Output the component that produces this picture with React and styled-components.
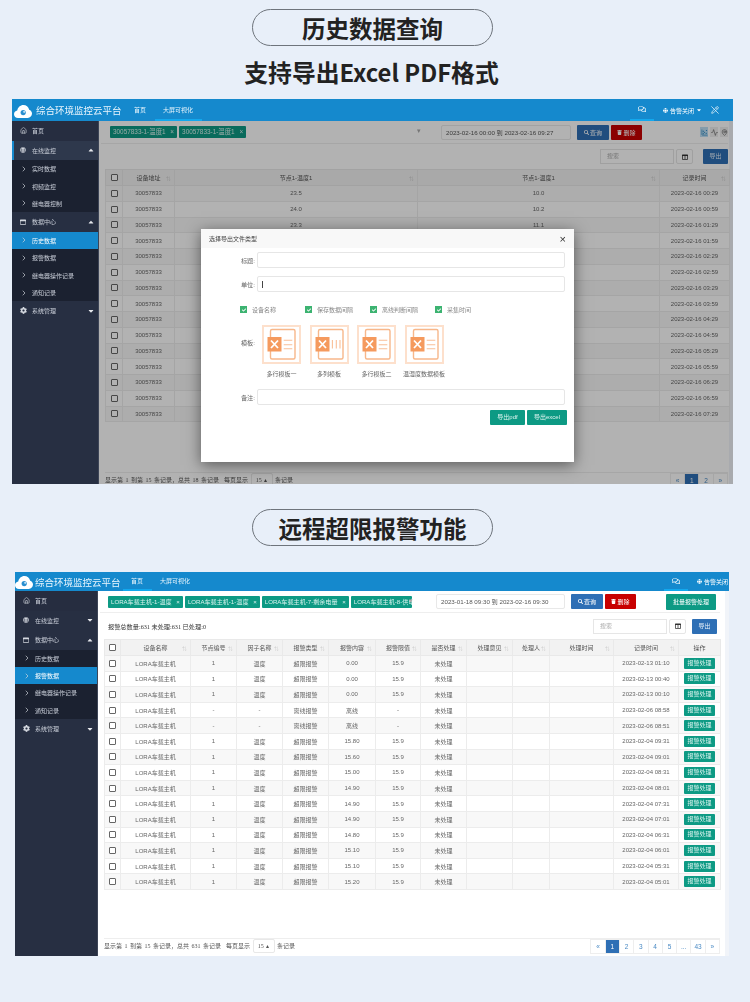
import React from "react";
import styled, { createGlobalStyle } from "styled-components";
import { House, ChevronRight, PencilOff, Activity, MapPin, ScatterChart } from "lucide-react";
import {
  FaGlobe, FaRegWindowMaximize, FaCog, FaCaretUp, FaCaretDown, FaRegComments,
  FaSearch, FaTrash, FaColumns, FaCheck,
} from "react-icons/fa";

const GREEN = "#0d9a84";
const BLUE = "#1589cd";

// only the first rows can be read, the modal covers the others
const historyRows = [
  ["23.5", "10.0", "00:29"], ["24.0", "10.2", "00:59"], ["23.3", "11.1", "01:29"],
  ["", "", "01:59"], ["", "", "02:29"], ["", "", "02:59"],
  ["", "", "03:29"], ["", "", "03:59"], ["", "", "04:29"],
  ["", "", "04:59"], ["", "", "05:29"], ["", "", "05:59"],
  ["", "", "06:29"], ["", "", "06:59"], ["", "", "07:29"],
];

const over = (content, time) => ["1", "温度", "超限报警", content, "15.9", time];
const offline = (time) => ["-", "-", "离线报警", "离线", "-", time];
const alarmRows = [
  over("0.00", "2023-02-13 01:10"), over("0.00", "2023-02-13 00:40"), over("0.00", "2023-02-13 00:10"),
  offline("2023-02-06 08:58"), offline("2023-02-06 08:51"),
  over("15.80", "2023-02-04 09:31"), over("15.60", "2023-02-04 09:01"), over("15.00", "2023-02-04 08:31"),
  over("14.90", "2023-02-04 08:01"), over("14.90", "2023-02-04 07:31"), over("14.90", "2023-02-04 07:01"),
  over("14.80", "2023-02-04 06:31"), over("15.10", "2023-02-04 06:01"), over("15.10", "2023-02-04 05:31"),
  over("15.20", "2023-02-04 05:01"),
];

const menuOne = [
  { type: "top", label: "首页", icon: <House size={7} /> },
  { type: "open", label: "在线监控", icon: <FaGlobe size={6} />, caret: "up" },
  { type: "sub", label: "实时数据" },
  { type: "sub", label: "视频监控" },
  { type: "sub", label: "继电器控制" },
  { type: "group", label: "数据中心", icon: <FaRegWindowMaximize size={6} />, caret: "up" },
  { type: "active", label: "历史数据" },
  { type: "sub", label: "报警数据" },
  { type: "sub", label: "继电器操作记录" },
  { type: "sub", label: "通知记录" },
  { type: "group", label: "系统管理", icon: <FaCog size={7} />, caret: "down" },
];

const menuTwo = [
  { type: "top", label: "首页", icon: <House size={7} /> },
  { type: "group", label: "在线监控", icon: <FaGlobe size={6} />, caret: "down" },
  { type: "group", label: "数据中心", icon: <FaRegWindowMaximize size={6} />, caret: "up" },
  { type: "sub", label: "历史数据" },
  { type: "active", label: "报警数据" },
  { type: "sub", label: "继电器操作记录" },
  { type: "sub", label: "通知记录" },
  { type: "group", label: "系统管理", icon: <FaCog size={7} />, caret: "down" },
];

export default function App() {
  return (
    <Page>
      <GlobalStyle />
      <PillTitle>历史数据查询</PillTitle>
      <SubTitle>支持导出Excel PDF格式</SubTitle>

      <Shot $left={12} $width={721} $height={385} $side={87} $head={22}>
        <TopBar active="大屏可视化" logoLeft={2} brandGap={4} tabOffset={4} cutRight={0} />
        <SideMenu items={menuOne} />
        <Content $padR={1}>
          <Toolbar $h={23}>
            <TagSelect $width={319} $pad={2}>
              <Tag $size={6.4}>30057833-1-温度1 <b>×</b></Tag>
              <Tag $size={6.4}>30057833-1-温度1 <b>×</b></Tag>
              <SelectArrow>▾</SelectArrow>
            </TagSelect>
            <DateBox $left={14} $width={130}>2023-02-16 00:00 到 2023-02-16 09:27</DateBox>
            <QueryBtn><FaSearch size={5} /> 查询</QueryBtn>
            <DeleteBtn><FaTrash size={5} /> 删除</DeleteBtn>
            <MiniIcons>
              <MiniIcon $on><ScatterChart size={7} /></MiniIcon>
              <MiniIcon><Activity size={7} /></MiniIcon>
              <MiniIcon><MapPin size={7} /></MiniIcon>
            </MiniIcons>
          </Toolbar>
          <SearchBar $h={25} $padR={0}>
            <SearchRight>
              <SearchBox>搜索</SearchBox>
              <ColumnBtn><FaColumns size={6} /></ColumnBtn>
              <ExportBtn $left={10}>导出</ExportBtn>
            </SearchRight>
          </SearchBar>
          <Table $row={15.75}>
            <colgroup>
              {[17, 52, 243, 242, 70].map((w, i) => <col key={i} width={w} />)}
            </colgroup>
            <thead>
              <tr>
                <Th><Box /></Th>
                {["设备地址", "节点1-温度1", "节点1-温度1", "记录时间"].map((h, i) => (
                  <Th key={i}>{h}<Sort>⇅</Sort></Th>
                ))}
              </tr>
            </thead>
            <tbody>
              {historyRows.map((r, i) => (
                <tr key={i}>
                  <Td><Box /></Td>
                  <Td>30057833</Td>
                  <Td>{r[0]}</Td>
                  <Td>{r[1]}</Td>
                  <Td>2023-02-16 {r[2]}</Td>
                </tr>
              ))}
            </tbody>
          </Table>
          <Footer $drop={-3}>
            <FooterText>
              显示第 1 到第 15 条记录，总共 18 条记录 &nbsp;每页显示 <PageSize>15 ▴</PageSize> 条记录
            </FooterText>
            <Pager pages={["«", "1", "2", "»"]} />
          </Footer>
          <Overlay>
            <ExportModal />
          </Overlay>
        </Content>
      </Shot>

      <PillTitle $top={25}>远程超限报警功能</PillTitle>

      <Shot $left={15} $width={714} $height={384} $side={83} $head={19} $top={26}>
        <TopBar active="首页" logoLeft={0} brandGap={2} tabOffset={2} cutRight={38} />
        <SideMenu items={menuTwo} />
        <Content $padR={5}>
          <Toolbar $h={22}>
            <TagSelect $width={312} $pad={1}>
              <Tag $size={6.1}>LORA车载主机-1-温度 <b>×</b></Tag>
              <Tag $size={6.1}>LORA车载主机-1-温度 <b>×</b></Tag>
              <Tag $size={6.1}>LORA车载主机-7-剩余电量 <b>×</b></Tag>
              <Tag $size={6.1} $cut>LORA车载主机-8-供电状态</Tag>
              <SelectArrow>▾</SelectArrow>
            </TagSelect>
            <DateBox $left={17} $width={129}>2023-01-18 09:30 到 2023-02-16 09:30</DateBox>
            <QueryBtn><FaSearch size={5} /> 查询</QueryBtn>
            <DeleteBtn><FaTrash size={5} /> 删除</DeleteBtn>
            <BatchBtn>批量报警处理</BatchBtn>
          </Toolbar>
          <SearchBar $h={26} $padR={3}>
            <Summary>报警总数量:631 未处理:631 已处理:0</Summary>
            <SearchRight>
              <SearchBox>搜索</SearchBox>
              <ColumnBtn><FaColumns size={6} /></ColumnBtn>
              <ExportBtn $left={6}>导出</ExportBtn>
            </SearchRight>
          </SearchBar>
          <Table $row={15.6}>
            <colgroup>
              {[16, 70, 46, 46, 46, 47, 45, 46, 46, 37, 64, 65, 42].map((w, i) => <col key={i} width={w} />)}
            </colgroup>
            <thead>
              <tr>
                <Th><Box /></Th>
                {["设备名称", "节点编号", "因子名称", "报警类型", "报警内容", "报警限值", "是否处理", "处理意见", "处理人", "处理时间", "记录时间"].map((h) => (
                  <Th key={h}>{h}<Sort>⇅</Sort></Th>
                ))}
                <Th>操作</Th>
              </tr>
            </thead>
            <tbody>
              {alarmRows.map((r, i) => (
                <tr key={i}>
                  <Td><Box /></Td>
                  <Td>LORA车载主机</Td>
                  <Td>{r[0]}</Td>
                  <Td>{r[1]}</Td>
                  <Td>{r[2]}</Td>
                  <Td>{r[3]}</Td>
                  <Td>{r[4]}</Td>
                  <Td>未处理</Td>
                  <Td />
                  <Td />
                  <Td />
                  <Td>{r[5]}</Td>
                  <Td><ActionBtn>报警处理</ActionBtn></Td>
                </tr>
              ))}
            </tbody>
          </Table>
          <Footer $drop={3}>
            <FooterText>
              显示第 1 到第 15 条记录，总共 631 条记录 &nbsp;每页显示 <PageSize>15 ▴</PageSize> 条记录
            </FooterText>
            <Pager pages={["«", "1", "2", "3", "4", "5", "...", "43", "»"]} />
          </Footer>
        </Content>
      </Shot>
    </Page>
  );
}

function TopBar({ active, logoLeft, brandGap, tabOffset, cutRight }) {
  return (
    <Head>
      <CloudLogo left={logoLeft} gap={brandGap} />
      <BrandName>综合环境监控云平台</BrandName>
      <NavTabs $left={tabOffset}>
        <NavTab $on={active === "首页"}>首页</NavTab>
        <NavTab $on={active === "大屏可视化"}>大屏可视化</NavTab>
      </NavTabs>
      <HeadRight $cut={cutRight}>
        <ChatTab><FaRegComments size={8} /></ChatTab>
        <AlarmBtn><FaGlobe size={5} /> 告警关闭 <FaCaretDown size={6} /></AlarmBtn>
        <PenBtn><PencilOff size={8} /></PenBtn>
      </HeadRight>
    </Head>
  );
}

function SideMenu({ items }) {
  return (
    <Side>
      {items.map((m) => (
        <MenuRow key={m.label} $type={m.type}>
          <MenuIcon>{m.icon || <ChevronRight size={8} />}</MenuIcon>
          {m.label}
          {m.caret === "up" && <MenuCaret><FaCaretUp size={8} /></MenuCaret>}
          {m.caret === "down" && <MenuCaret><FaCaretDown size={8} /></MenuCaret>}
        </MenuRow>
      ))}
    </Side>
  );
}

function Pager({ pages }) {
  return (
    <PagerRow>
      {pages.map((p) => <PageBtn key={p} $on={p === "1"}>{p}</PageBtn>)}
    </PagerRow>
  );
}

function ExcelIcon({ columns }) {
  return (
    <TemplateFrame>
      <svg width="35" height="35" viewBox="2 2 35 35" fill="none">
        <rect x="8.5" y="4.5" width="24.5" height="29.5" rx="1.5" stroke="#f7b78a" strokeWidth="1.4" />
        <rect x="5.5" y="12" width="14" height="14.5" fill="#f59a5e" />
        <path d="M9 15.5l7 7.5M16 15.5l-7 7.5" stroke="#fff" strokeWidth="1.8" />
        {columns ? (
          <path d="M22.4 15v8.5M26.3 15v8.5M30 15v8.5" stroke="#f9bf98" strokeWidth="1.1" />
        ) : (
          <path d="M21.7 15.3h8.6M21.7 19.7h8.6M21.7 23.8h8.6" stroke="#f9bf98" strokeWidth="1.1" />
        )}
      </svg>
    </TemplateFrame>
  );
}

function ExportModal() {
  return (
    <Modal>
      <ModalHead>选择导出文件类型<CloseMark>×</CloseMark></ModalHead>
      <ModalBody>
        <FormRow>
          <FormLabel>标题:</FormLabel>
          <FormInput />
        </FormRow>
        <FormRow>
          <FormLabel>单位:</FormLabel>
          <FormInput><Caret /></FormInput>
        </FormRow>
        <Checks>
          {["设备名称", "保存数据间隔", "离线判断间隔", "采集时间"].map((c) => (
            <CheckItem key={c}><CheckMark><FaCheck size={4} /></CheckMark>{c}</CheckItem>
          ))}
        </Checks>
        <TemplateRow>
          <FormLabel $mid>模板:</FormLabel>
          <Templates>
            <Template><ExcelIcon /><TemplateName>多行模板一</TemplateName></Template>
            <Template><ExcelIcon columns /><TemplateName>多列模板</TemplateName></Template>
            <Template><ExcelIcon /><TemplateName>多行模板二</TemplateName></Template>
            <Template><ExcelIcon /><TemplateName>温湿度数据模板</TemplateName></Template>
          </Templates>
        </TemplateRow>
        <FormRow>
          <FormLabel>备注:</FormLabel>
          <FormInput />
        </FormRow>
        <ModalActions>
          <ModalBtn $w={35}>导出pdf</ModalBtn>
          <ModalBtn $w={40}>导出excel</ModalBtn>
        </ModalActions>
      </ModalBody>
    </Modal>
  );
}

function CloudLogo({ left, gap }) {
  return (
    <LogoWrap $left={left} $gap={gap}>
      <svg width="18" height="13" viewBox="0 0 18 13">
        <path d="M4 13C1.8 13 0 11.4 0 9.3 0 7.4 1.4 5.9 3.2 5.6 3.8 2.4 6.3 0 9.4 0c2.8 0 5.1 2 5.8 4.7 1.6.5 2.8 2.1 2.8 3.9C18 11 16.1 13 13.7 13z" fill="#fff" />
        <circle cx="9.2" cy="7.6" r="2.6" fill="#2a8fd0" />
        <circle cx="10.2" cy="6.8" r="1.1" fill="#bfe0f5" />
      </svg>
    </LogoWrap>
  );
}

// style ----------------
const GlobalStyle = createGlobalStyle`
  html, body {
    margin: 0;
    background: #e8eff9;
    font-family: "Liberation Sans", "Noto Sans CJK SC", sans-serif;
  }
`;

const Page = styled.div`
  width: 750px;
  height: 1002px;
  padding-top: 9px;
  box-sizing: border-box;
  overflow: hidden;
  display: flex;
  flex-direction: column;
  background: #e8eff9;
`;

const PillTitle = styled.div`
  width: 241px;
  height: 37px;
  margin: ${(p) => p.$top || 0}px 0 0 252px;
  box-sizing: border-box;
  flex-shrink: 0;
  border: 1px solid #6e747c;
  border-radius: 19px;
  display: flex;
  align-items: center;
  justify-content: center;
  font-family: "Noto Sans CJK SC", sans-serif;
  font-size: 23.5px;
  font-weight: 700;
  color: #222;
`;

const SubTitle = styled.div`
  margin-top: 8px;
  height: 36px;
  line-height: 36px;
  padding-right: 7px;
  text-align: center;
  font-family: "Noto Sans CJK SC", sans-serif;
  font-size: 23.8px;
  font-weight: 700;
  color: #222;
  flex-shrink: 0;
`;

const Shot = styled.section`
  margin: ${(p) => p.$top || 9}px 0 0 ${(p) => p.$left}px;
  width: ${(p) => p.$width}px;
  height: ${(p) => p.$height}px;
  flex-shrink: 0;
  overflow: hidden;
  display: grid;
  grid-template-columns: ${(p) => p.$side}px 1fr;
  grid-template-rows: ${(p) => p.$head}px 1fr;
  background: #fff;
  filter: blur(0.3px);
`;

const Head = styled.header`
  grid-column: 1 / 3;
  display: flex;
  align-items: center;
  background: ${BLUE};
  color: #fff;
  white-space: nowrap;
  overflow: hidden;
`;

const LogoWrap = styled.div`
  width: 18px;
  height: 13px;
  margin: 0 ${(p) => p.$gap}px 0 ${(p) => p.$left}px;
  flex-shrink: 0;
`;

const BrandName = styled.div`
  font-size: 9.5px;
  color: #e8f5fd;
`;

const NavTabs = styled.nav`
  display: flex;
  align-self: stretch;
  margin-left: ${(p) => p.$left}px;
`;

const NavTab = styled.div`
  display: flex;
  align-items: center;
  padding: 0 8.5px;
  font-size: 6px;
  color: #e6f4fc;
  border-bottom: 2px solid ${(p) => (p.$on ? "#12a8ee" : "transparent")};
  box-sizing: border-box;
`;

const HeadRight = styled.div`
  margin-left: auto;
  margin-right: -${(p) => p.$cut}px;
  display: flex;
  align-self: stretch;
  align-items: center;
  width: 103px;
  flex-shrink: 0;
`;

const ChatTab = styled.div`
  width: 24px;
  align-self: stretch;
  display: flex;
  align-items: center;
  justify-content: center;
  border-bottom: 2px solid #12a8ee;
  box-sizing: border-box;
`;

const AlarmBtn = styled.div`
  margin-left: 9px;
  display: flex;
  align-items: center;
  gap: 2px;
  font-size: 6px;
`;

const PenBtn = styled.div`
  margin-left: 9px;
  display: flex;
`;

const Side = styled.aside`
  background: #272f42;
  border-right: 1px solid #3d4557;
  box-sizing: border-box;
`;

const rowBg = { top: "#262d40", open: "#2e384c", group: "#272f42", sub: "#1b2130", active: BLUE };

const MenuRow = styled.div`
  position: relative;
  height: ${(p) => (p.$type === "sub" || p.$type === "active" ? 17.4 : 19.5)}px;
  display: flex;
  align-items: center;
  padding-left: ${(p) => (p.$type === "open" ? 6 : 8)}px;
  border-left: ${(p) => (p.$type === "open" ? `2px solid ${BLUE}` : "none")};
  background: ${(p) => rowBg[p.$type]};
  color: ${(p) => (p.$type === "active" ? "#fff" : "#c9ced8")};
  font-size: 6px;
  white-space: nowrap;
`;

const MenuIcon = styled.span`
  width: 12px;
  display: flex;
  justify-content: flex-start;
  color: #d5d9e0;
`;

const MenuCaret = styled.span`
  position: absolute;
  right: 3px;
  top: 50%;
  transform: translateY(-50%);
  display: flex;
  color: #e6e8ec;
`;

const Content = styled.main`
  position: relative;
  display: flex;
  flex-direction: column;
  min-width: 0;
  min-height: 0;
  padding: 0 ${(p) => p.$padR}px 0 6px;
  border-right: 4px solid #f1f4f9;
  background: #fff;
`;

const Toolbar = styled.div`
  height: ${(p) => p.$h}px;
  flex-shrink: 0;
  display: flex;
  align-items: center;
  margin: 0 0 0 -4px;
  padding-left: 7px;
  border-bottom: 1px solid #eee;
  box-sizing: border-box;
`;

const TagSelect = styled.div`
  position: relative;
  width: ${(p) => p.$width}px;
  height: 16px;
  flex-shrink: 0;
  display: flex;
  align-items: center;
  gap: 2px;
  padding-left: ${(p) => p.$pad}px;
  box-sizing: border-box;
  overflow: hidden;
`;

const Tag = styled.span`
  height: 12px;
  padding: 0 3px;
  background: ${GREEN};
  color: #d8f3ee;
  font-size: ${(p) => p.$size}px;
  line-height: 12px;
  white-space: nowrap;
  flex-shrink: 0;
  max-width: ${(p) => (p.$cut ? "61px" : "none")};
  box-sizing: ${(p) => (p.$cut ? "border-box" : "content-box")};
  overflow: hidden;
  border-radius: 1px;
  b { font-weight: 400; margin-left: 3px; }
`;

const SelectArrow = styled.span`
  position: absolute;
  right: 6px;
  top: 3px;
  font-size: 7px;
  color: #aaa;
`;

const DateBox = styled.div`
  margin-left: ${(p) => p.$left}px;
  width: ${(p) => p.$width}px;
  height: 15px;
  flex-shrink: 0;
  border: 1px solid #e8e8e8;
  border-radius: 2px;
  padding-left: 4px;
  box-sizing: border-box;
  font-size: 6.2px;
  line-height: 13px;
  color: #555;
  white-space: nowrap;
`;

const ActBtn = styled.button`
  height: 15px;
  width: 32px;
  padding: 0;
  border: 0;
  border-radius: 1px;
  display: flex;
  align-items: center;
  justify-content: center;
  gap: 1px;
  font: inherit;
  font-size: 6px;
  color: #fff;
  flex-shrink: 0;
`;

const QueryBtn = styled(ActBtn)`
  margin-left: 6px;
  background: #2e6fb5;
`;

const DeleteBtn = styled(ActBtn)`
  margin-left: 2px;
  width: 31px;
  background: #c80000;
`;

const BatchBtn = styled(ActBtn)`
  margin-left: auto;
  margin-right: 4px;
  width: 50px;
  height: 16px;
  background: ${GREEN};
`;

const MiniIcons = styled.div`
  margin-left: auto;
  display: flex;
  gap: 2px;
`;

const MiniIcon = styled.span`
  width: 8px;
  height: 10px;
  display: flex;
  align-items: center;
  justify-content: center;
  background: ${(p) => (p.$on ? "#bfe0f5" : "#eee")};
  color: ${(p) => (p.$on ? "#1c7fc0" : "#555")};
`;

const SearchBar = styled.div`
  height: ${(p) => p.$h}px;
  flex-shrink: 0;
  display: flex;
  align-items: center;
  padding-right: ${(p) => p.$padR}px;
`;

const Summary = styled.div`
  margin-left: 4px;
  font-family: "Liberation Serif", "Noto Sans CJK SC", serif;
  font-size: 6.2px;
  color: #333;
`;

const SearchRight = styled.div`
  margin-left: auto;
  display: flex;
  align-items: center;
`;

const SearchBox = styled.div`
  width: 74px;
  height: 15px;
  border: 1px solid #e6e6e6;
  box-sizing: border-box;
  padding-left: 6px;
  font-size: 6px;
  line-height: 13px;
  color: #aaa;
`;

const ColumnBtn = styled.div`
  width: 17px;
  height: 15px;
  margin-left: 2px;
  border: 1px solid #e6e6e6;
  border-radius: 2px;
  box-sizing: border-box;
  display: flex;
  align-items: center;
  justify-content: center;
  color: #333;
`;

const ExportBtn = styled.div`
  width: 25px;
  height: 15px;
  margin-left: ${(p) => p.$left}px;
  background: #2e6fb5;
  border-radius: 1px;
  color: #e8f1fa;
  font-size: 6px;
  line-height: 15px;
  text-align: center;
`;

const Table = styled.table`
  flex-shrink: 0;
  border-collapse: collapse;
  table-layout: fixed;
  width: 100%;
  font-size: 6px;
  color: #666;
  tbody tr:nth-child(odd) { background: #f8f8f8; }
  td { height: ${(p) => p.$row}px; }
`;

const Th = styled.th`
  position: relative;
  box-sizing: border-box;
  height: 16px;
  padding: 0;
  border: 1px solid #e9e9e9;
  background: #f2f2f2;
  font-weight: 400;
  color: #555;
  white-space: nowrap;
`;

const Td = styled.td`
  box-sizing: border-box;
  padding: 0;
  border: 1px solid #ececec;
  text-align: center;
  white-space: nowrap;
`;

const Sort = styled.span`
  position: absolute;
  right: 3px;
  top: 4px;
  font-size: 5px;
  color: #ccc;
`;

const Box = styled.span`
  display: inline-block;
  width: 5px;
  height: 5px;
  border: 1px solid #666;
  border-radius: 1px;
  vertical-align: middle;
  background: #fff;
`;

const ActionBtn = styled.span`
  display: inline-block;
  width: 31px;
  height: 11px;
  background: ${GREEN};
  border-radius: 1px;
  color: #d9f3ee;
  line-height: 11px;
  vertical-align: middle;
`;

const Footer = styled.footer`
  margin-top: auto;
  margin-bottom: ${(p) => p.$drop}px;
  height: 15px;
  flex-shrink: 0;
  display: flex;
  align-items: center;
  justify-content: space-between;
  border-top: 1px solid #eee;
  box-sizing: border-box;
`;

const FooterText = styled.div`
  font-family: "Liberation Serif", "Noto Sans CJK SC", serif;
  font-size: 6px;
  word-spacing: 1px;
  color: #555;
  white-space: nowrap;
`;

const PageSize = styled.span`
  display: inline-block;
  width: 22px;
  height: 14px;
  line-height: 13px;
  text-align: center;
  border: 1px solid #e8e8e8;
  border-radius: 2px;
  box-sizing: border-box;
  background: #fff;
`;

const PagerRow = styled.div`
  display: flex;
  height: 15px;
  flex-shrink: 0;
`;

const PageBtn = styled.span`
  min-width: 15.3px;
  height: 15px;
  padding: 0 3px;
  box-sizing: border-box;
  border: 1px solid #eee;
  margin-left: -1px;
  background: ${(p) => (p.$on ? "#2e6fb5" : "#fff")};
  color: ${(p) => (p.$on ? "#fff" : "#4a8ac4")};
  font-size: 6.5px;
  line-height: 13px;
  text-align: center;
`;

const Overlay = styled.div`
  position: absolute;
  inset: 0 -4px 0 0;
  background: rgba(0, 0, 0, 0.3);
  display: flex;
  align-items: flex-start;
`;

const Modal = styled.div`
  width: 373px;
  height: 233px;
  margin: 108px 0 0 102px;
  background: #fff;
  box-shadow: 0 3px 14px rgba(0, 0, 0, 0.5);
  display: flex;
  flex-direction: column;
`;

const ModalHead = styled.div`
  height: 19px;
  flex-shrink: 0;
  padding: 0 8px;
  display: flex;
  align-items: center;
  justify-content: space-between;
  background: #f8f8f8;
  font-size: 6px;
  color: #444;
`;

const CloseMark = styled.span`
  font-size: 11px;
  color: #333;
`;

const ModalBody = styled.div`
  padding: 4px 7px 0 0;
  display: flex;
  flex-direction: column;
  font-size: 6px;
  color: #666;
`;

const FormRow = styled.div`
  display: grid;
  grid-template-columns: 54px 308px;
  column-gap: 2px;
  align-items: center;
  margin-bottom: 8px;
`;

const FormLabel = styled.label`
  text-align: right;
  font-size: 6.2px;
  color: #666;
  margin-top: ${(p) => (p.$mid ? 13 : 0)}px;
`;

const FormInput = styled.div`
  height: 16px;
  border: 1px solid #e6e6e6;
  border-radius: 2px;
  box-sizing: border-box;
  display: flex;
  align-items: center;
  padding-left: 4px;
`;

const Caret = styled.span`
  width: 1px;
  height: 7px;
  background: #444;
`;

const Checks = styled.div`
  display: grid;
  grid-template-columns: repeat(4, 65px);
  padding-left: 39px;
  margin: 5px 0 12px;
  height: 8px;
  align-items: center;
`;

const CheckItem = styled.div`
  display: flex;
  align-items: center;
  gap: 5px;
  white-space: nowrap;
  color: #888;
`;

const CheckMark = styled.span`
  width: 7px;
  height: 7px;
  background: #3cb371;
  color: #fff;
  display: flex;
  align-items: center;
  justify-content: center;
`;

const TemplateRow = styled.div`
  display: grid;
  grid-template-columns: 54px 1fr;
  column-gap: 2px;
  height: 64px;
`;

const Templates = styled.div`
  display: flex;
  gap: 8.5px;
  padding-left: 5px;
`;

const Template = styled.div`
  width: 39px;
  display: flex;
  flex-direction: column;
  align-items: center;
  gap: 5px;
`;

const TemplateName = styled.span`
  white-space: nowrap;
  color: #666;
`;

const TemplateFrame = styled.div`
  width: 39px;
  height: 39px;
  flex-shrink: 0;
  box-sizing: border-box;
  border: 2px solid #fde0cc;
`;

const ModalActions = styled.div`
  display: flex;
  justify-content: flex-end;
  gap: 2px;
  margin-top: -3px;
`;

const ModalBtn = styled.div`
  width: ${(p) => p.$w}px;
  height: 15px;
  background: ${GREEN};
  border-radius: 1px;
  color: #dff5f0;
  font-size: 6px;
  line-height: 15px;
  text-align: center;
`;
